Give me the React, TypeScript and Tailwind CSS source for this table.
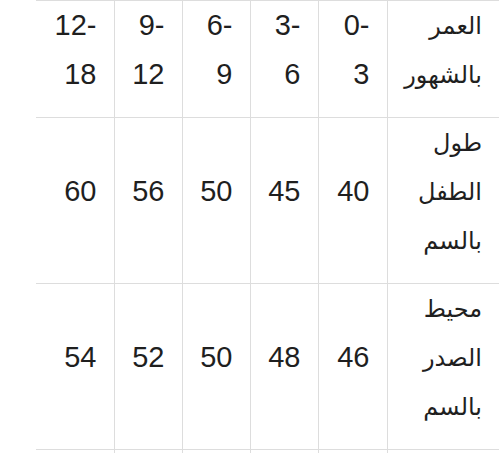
const rows = [
  { label: ["العمر", "بالشهور"], values: ["0-3", "3-6", "6-9", "9-12", "12-18"] },
  { label: ["طول", "الطفل", "بالسم"], values: ["40", "45", "50", "56", "60"] },
  { label: ["محيط", "الصدر", "بالسم"], values: ["46", "48", "50", "52", "54"] },
];

const colWidths = ["w-[112px]", "w-[69px]", "w-[68px]", "w-[68px]", "w-[68px]", "w-[78px]"];

const App = () => {
  return (
    <div dir="rtl" className="h-[453px] w-full overflow-hidden bg-white text-[#1f1f1f] font-['Liberation_Sans','DejaVu_Sans',sans-serif]">
      <table className="table-fixed border-collapse w-[463px] text-[29px] leading-[49px]">
        <colgroup>
          {colWidths.map((w, i) => (
            <col key={i} className={w} />
          ))}
        </colgroup>
        <tbody>
          {rows.map((row, r) => (
            <tr key={r}>
              <td className="border-t border-b border-l border-[#dddddd] px-[17px] pt-0 pb-[18px] align-top text-right">
                {row.label.map((word) => (
                  <span key={word} className="block whitespace-nowrap text-[24px] leading-[49px]">
                    {word}
                  </span>
                ))}
              </td>
              {row.values.map((v, i) => (
                <td
                  key={i}
                  dir="ltr"
                  className={`border-t border-b border-[#dddddd] px-[17px] pt-0 pb-[18px] align-middle text-right [overflow-wrap:anywhere] ${
                    i < row.values.length - 1 ? "border-l" : ""
                  }`}
                >
                  {v}
                </td>
              ))}
            </tr>
          ))}
          <tr>
            <td className="border-t border-l border-[#dddddd] h-[60px]"></td>
            <td className="border-t border-l border-[#dddddd]"></td>
            <td className="border-t border-l border-[#dddddd]"></td>
            <td className="border-t border-l border-[#dddddd]"></td>
            <td className="border-t border-l border-[#dddddd]"></td>
            <td className="border-t border-[#dddddd]"></td>
          </tr>
        </tbody>
      </table>
    </div>
  );
};

export default App;
